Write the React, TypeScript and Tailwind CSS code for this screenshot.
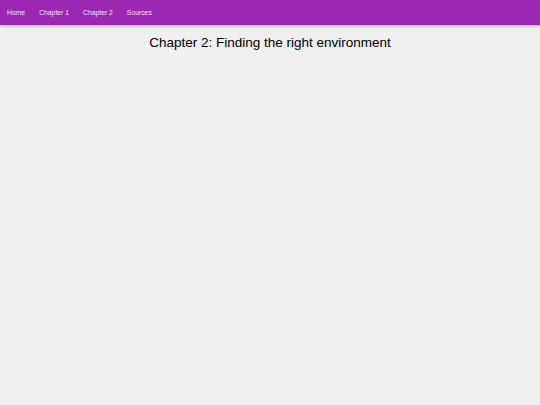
export default function App() {
  const links = ["Home", "Chapter 1", "Chapter 2", "Sources"]

  return (
    <div className="min-h-screen bg-[#efefef] font-['Liberation_Sans',Arial,sans-serif]">
      <nav className="flex h-[25px] items-center gap-[14px] bg-[#9c27b0] px-[7px] pt-[1px] shadow-[0_1px_3px_rgba(0,0,0,0.3)]">
        {links.map((link) => (
          <a key={link} href="#" className="text-[6.8px] text-[#f3e0f7]">
            {link}
          </a>
        ))}
      </nav>
      <h1 className="mt-[10px] text-center text-[13.5px] leading-[16px] text-black">
        Chapter 2: Finding the right environment
      </h1>
    </div>
  )
}
